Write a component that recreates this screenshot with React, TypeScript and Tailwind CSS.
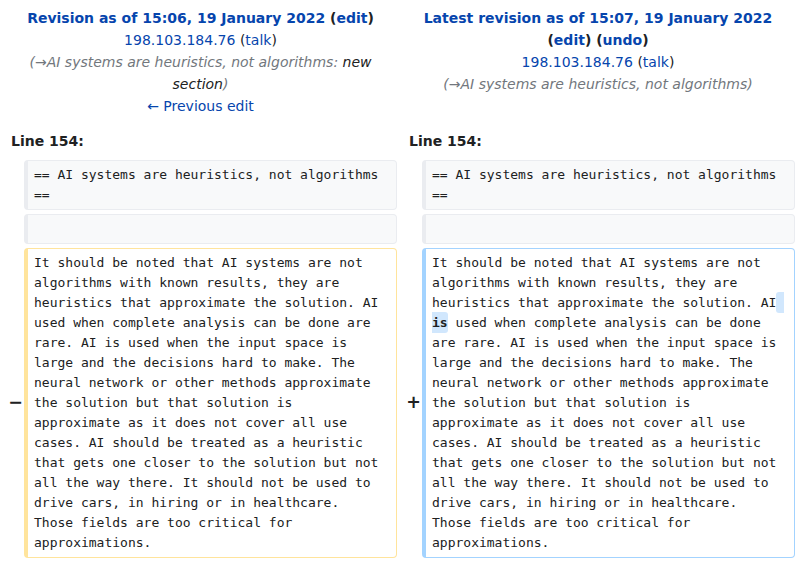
const sans = "font-['DejaVu_Sans','Liberation_Sans',sans-serif]";
const mono = "font-['DejaVu_Sans_Mono','Liberation_Mono',monospace]";

const before =
	'It should be noted that AI systems are not algorithms with known results, they are heuristics that approximate the solution. AI';
const after =
	' used when complete analysis can be done are rare. AI is used when the input space is large and the decisions hard to make. The neural network or other methods approximate the solution but that solution is approximate as it does not cover all use cases. AI should be treated as a heuristic that gets one closer to the solution but not all the way there. It should not be used to drive cars, in hiring or in healthcare. Those fields are too critical for approximations.';

function Link({ children }: { children: React.ReactNode }) {
	return <a className="text-[#0645ad] cursor-pointer">{children}</a>;
}

const textCell = `rounded-[4px] border border-l-4 py-1 pl-1.5 pr-[11px] whitespace-pre-wrap break-words ${mono} text-[13px] leading-[20px] text-[#202122]`;

function ContextRow({ text }: { text: string }) {
	const cell = `${textCell} border-[#eaecf0] bg-[#f8f9fa] min-h-[30px]`;
	return (
		<>
			<div />
			<div className={cell}>{text}</div>
			<div />
			<div className={cell}>{text}</div>
		</>
	);
}

export default function App() {
	return (
		<div className={`w-[799px] bg-white px-1 pt-1 pb-1 ${sans} text-[14px] text-[#202122]`}>
			<div className="grid grid-cols-[16px_373px_17px_373px] gap-1">
				{/* headers */}
				<div className="col-span-2 px-1 pt-[3px] text-center leading-[22px]">
					<div className="font-bold">
						<Link>Revision as of 15:06, 19 January 2022</Link> (<Link>edit</Link>)
					</div>
					<div>
						<Link>198.103.184.76</Link> (<Link>talk</Link>)
					</div>
					<div className="italic text-[#72777d]">
						(→AI systems are heuristics, not algorithms: <span className="text-[#202122]">new section</span>)
					</div>
					<div>
						<Link>← Previous edit</Link>
					</div>
				</div>
				<div className="col-span-2 px-1 pt-[3px] text-center leading-[22px]">
					<div className="font-bold">
						<Link>Latest revision as of 15:07, 19 January 2022</Link> (<Link>edit</Link>) (
						<Link>undo</Link>)
					</div>
					<div>
						<Link>198.103.184.76</Link> (<Link>talk</Link>)
					</div>
					<div className="italic text-[#72777d]">(→AI systems are heuristics, not algorithms)</div>
				</div>

				{/* line numbers */}
				<div className="col-span-2 pl-[7px] pt-[10px] pb-[5px] font-bold leading-[20px]">Line 154:</div>
				<div className="col-span-2 pl-[8px] pt-[10px] pb-[5px] font-bold leading-[20px]">Line 154:</div>

				<ContextRow text="== AI systems are heuristics, not algorithms ==" />
				<ContextRow text="" />

				{/* changed paragraph */}
				<div className="flex items-center justify-end">
					<span className="-mr-[3px] text-[17.5px] font-bold leading-none">−</span>
				</div>
				<div className={`${textCell} border-[#ffe49c] bg-white`}>
					{before}
					{after}
				</div>
				<div className="flex items-center justify-end">
					<span className="-mr-[3px] text-[17.5px] font-bold leading-none">+</span>
				</div>
				<div className={`${textCell} border-[#a3d3ff] bg-white`}>
					{before}
					<span className="rounded-[3px] bg-[#d1e7fd] py-[3px] font-bold">{' is'}</span>
					{after}
				</div>
			</div>
		</div>
	);
}
